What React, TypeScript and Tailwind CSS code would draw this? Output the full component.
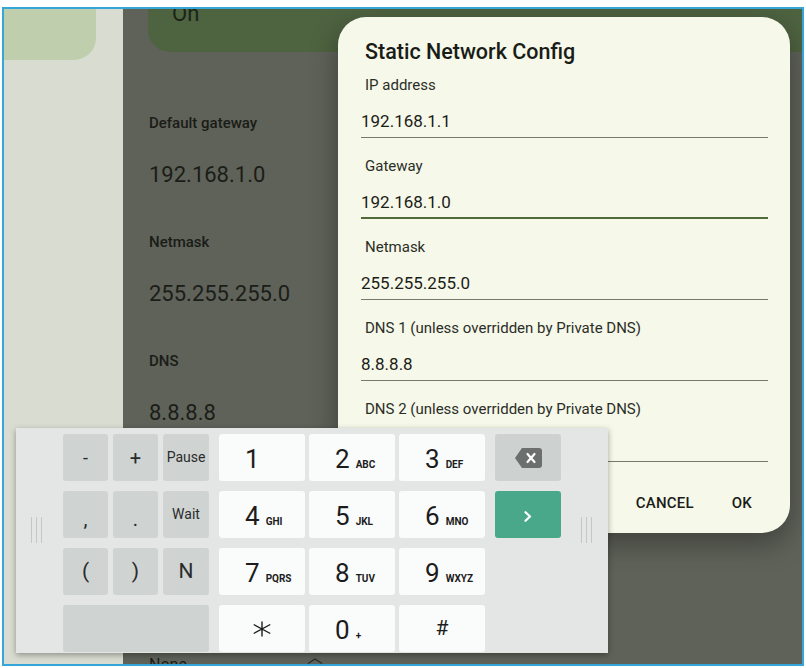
import React from "react";

const FONT = "font-['Roboto','Noto_Sans',sans-serif]";

function Handle() {
  return (
    <div className="flex gap-[4px] h-[26px]">
      <div className="w-px h-full bg-[#c3c7c6]" />
      <div className="w-px h-full bg-[#c3c7c6]" />
      <div className="w-px h-full bg-[#c3c7c6]" />
    </div>
  );
}

function SmallKey({ children, className }: { children?: React.ReactNode; className: string }) {
  return (
    <div className={`h-[47px] rounded-[3px] bg-[#cfd3d2] flex items-center justify-center text-[#2a2c2b] ${className}`}>
      {children}
    </div>
  );
}

function NumKey({ d, l, className }: { d: string; l?: string; className?: string }) {
  return (
    <div className={`w-[86px] h-[47px] rounded-[3px] bg-[#fafbfb] flex items-center pl-[26px] pt-[2px] ${className ?? ""}`}>
      <div className="flex items-baseline">
        <span className="text-[26px] leading-none text-[#1c1c1c]">{d}</span>
        {l ? <span className="ml-[6px] text-[10px] font-bold leading-none text-[#1c1c1c]">{l}</span> : null}
      </div>
    </div>
  );
}

function CenterKey({ children, className }: { children: React.ReactNode; className?: string }) {
  return (
    <div className={`w-[86px] h-[47px] rounded-[3px] bg-[#fafbfb] flex items-center justify-center text-[#1c1c1c] ${className ?? ""}`}>
      {children}
    </div>
  );
}

function Field({ label, value, focused }: { label: string; value: string; focused?: boolean }) {
  return (
    <div>
      <div className="pl-[4px] h-[20px] leading-[20px] text-[15px] text-[#2b2e27]">{label}</div>
      {focused ? (
        <div className="mt-[14px] h-[29px] text-[17px] leading-[24px] text-[#1b1c17] border-b-2 border-[#4f6b3a]">{value}</div>
      ) : (
        <div className="mt-[14px] h-[29px] text-[17px] leading-[24px] text-[#1b1c17] border-b border-[#767a6e]">{value}</div>
      )}
    </div>
  );
}

function InfoRow({ label, value }: { label: string; value: string }) {
  return (
    <div className="shrink-0">
      <div className="h-[20px] leading-[20px] text-[15px] font-medium text-[#1a1c17]">{label}</div>
      <div className="mt-[28px] h-[28px] leading-[28px] text-[22px] text-[#1b1d18]">{value}</div>
    </div>
  );
}

export default function App() {
  return (
    <div className={`w-[806px] h-[668px] bg-white overflow-hidden ${FONT}`}>
      <div className="ml-[2px] mt-[7px] w-[802px] h-[659px] border-2 border-[#34a6da] relative overflow-hidden flex">
        {/* navigation column */}
        <aside className="w-[119px] h-full bg-[#d9ddd1] shrink-0">
          <div className="w-[92px] h-[51px] bg-[#bfcfae] rounded-br-[22px]" />
        </aside>

        {/* detail pane behind the scrim */}
        <main className="flex-1 h-full bg-[#5f6259] flex flex-col overflow-hidden">
          <div className="shrink-0 ml-[25px] h-[43px] bg-[#4e6340] rounded-bl-[22px] pl-[24px] overflow-hidden">
            <div className="mt-[-6px] text-[22px] leading-none text-[#1b2317]">On</div>
          </div>
          <div className="shrink-0 pl-[26px] mt-[61px] flex flex-col gap-[43px]">
            <InfoRow label="Default gateway" value="192.168.1.0" />
            <InfoRow label="Netmask" value="255.255.255.0" />
            <InfoRow label="DNS" value="8.8.8.8" />
          </div>
          <div className="shrink-0 pl-[26px] mt-[226px] flex items-start">
            <span className="text-[16px] leading-[24px] text-[#1b1d18]">None</span>
            <svg className="ml-[120px] mt-[5px]" width="16" height="6" viewBox="0 0 16 6">
              <path d="M1 5.5 L8 1 L15 5.5" fill="none" stroke="#2a2c27" strokeWidth="1.2" />
            </svg>
          </div>
        </main>

        {/* dialog */}
        <div className="absolute left-[334px] top-[8px] w-[452px] h-[516px] bg-[#f6f8ea] rounded-[28px] shadow-[0_10px_28px_rgba(0,0,0,0.35)] pt-[21px] pl-[23px] pr-[22px] flex flex-col">
          <div className="pl-[4px] h-[28px] leading-[28px] text-[21.5px] font-medium text-[#1a1c17]">Static Network Config</div>
          <div className="mt-[9px] flex flex-col gap-[18px]">
            <Field label="IP address" value="192.168.1.1" />
            <Field label="Gateway" value="192.168.1.0" focused />
            <Field label="Netmask" value="255.255.255.0" />
            <Field label="DNS 1 (unless overridden by Private DNS)" value="8.8.8.8" />
            <Field label="DNS 2 (unless overridden by Private DNS)" value="" />
          </div>
          <div className="mt-[31px] flex justify-end gap-[38px] pr-[16px]">
            <span className="h-[20px] leading-[20px] text-[15px] font-medium tracking-[0.2px] text-[#1b1c17]">CANCEL</span>
            <span className="h-[20px] leading-[20px] text-[15px] font-medium tracking-[0.2px] text-[#1b1c17]">OK</span>
          </div>
        </div>

        {/* dial pad keyboard */}
        <div className="absolute left-[12px] top-[419px] w-[592px] h-[225px] bg-[#e4e6e6] shadow-[0_2px_6px_rgba(0,0,0,0.35)] flex">
          <div className="w-[47px] pl-[15px] pt-[89px] shrink-0">
            <Handle />
          </div>
          <div className="pt-[6px] flex flex-col gap-[10px]">
            <div className="flex">
              <SmallKey className="w-[45px] text-[18px]">-</SmallKey>
              <SmallKey className="w-[45px] ml-[5px] text-[20px]">+</SmallKey>
              <SmallKey className="w-[46px] ml-[5px] text-[14px]">Pause</SmallKey>
              <NumKey d="1" className="ml-[10px]" />
              <NumKey d="2" l="ABC" className="ml-[4px]" />
              <NumKey d="3" l="DEF" className="ml-[4px]" />
              <div className="ml-[10px] w-[66px] h-[47px] rounded-[3px] bg-[#cdd1d0] flex items-center justify-center">
                <svg width="27" height="20" viewBox="0 0 27 20">
                  <path d="M7 0 H24 A3 3 0 0 1 27 3 V17 A3 3 0 0 1 24 20 H7 L0 10 Z" fill="#6b6f6e" />
                  <path d="M12.5 6 L19.5 14 M19.5 6 L12.5 14" stroke="#ffffff" strokeWidth="2.2" strokeLinecap="round" />
                </svg>
              </div>
            </div>
            <div className="flex">
              <SmallKey className="w-[45px] text-[20px] pt-[8px]">,</SmallKey>
              <SmallKey className="w-[45px] ml-[5px] text-[20px] pt-[8px]">.</SmallKey>
              <SmallKey className="w-[46px] ml-[5px] text-[14px]">Wait</SmallKey>
              <NumKey d="4" l="GHI" className="ml-[10px]" />
              <NumKey d="5" l="JKL" className="ml-[4px]" />
              <NumKey d="6" l="MNO" className="ml-[4px]" />
              <div className="ml-[10px] w-[66px] h-[47px] rounded-[3px] bg-[#4aa88a] flex items-center justify-center pt-[4px]">
                <svg width="8" height="11" viewBox="0 0 8 11">
                  <path d="M1.5 1.2 L6 5.5 L1.5 9.8" fill="none" stroke="#ffffff" strokeWidth="2.2" strokeLinecap="round" strokeLinejoin="round" />
                </svg>
              </div>
            </div>
            <div className="flex">
              <SmallKey className="w-[45px] text-[21px]">(</SmallKey>
              <SmallKey className="w-[45px] ml-[5px] text-[21px]">)</SmallKey>
              <SmallKey className="w-[46px] ml-[5px] text-[21px]">N</SmallKey>
              <NumKey d="7" l="PQRS" className="ml-[10px]" />
              <NumKey d="8" l="TUV" className="ml-[4px]" />
              <NumKey d="9" l="WXYZ" className="ml-[4px]" />
            </div>
            <div className="flex">
              <SmallKey className="w-[146px]" />
              <CenterKey className="ml-[10px]">
                <svg width="18" height="16" viewBox="-9 -8 18 16">
                  <path d="M0 -7.5 V7.5 M-8.3 -4.5 L8.3 4.5 M-8.3 4.5 L8.3 -4.5" stroke="#1c1c1c" strokeWidth="1.4" />
                </svg>
              </CenterKey>
              <NumKey d="0" l="+" className="ml-[4px]" />
              <CenterKey className="ml-[4px] text-[21px]">#</CenterKey>
            </div>
          </div>
          <div className="w-[47px] pl-[20px] pt-[89px] ml-auto shrink-0">
            <Handle />
          </div>
        </div>
      </div>
    </div>
  );
}
